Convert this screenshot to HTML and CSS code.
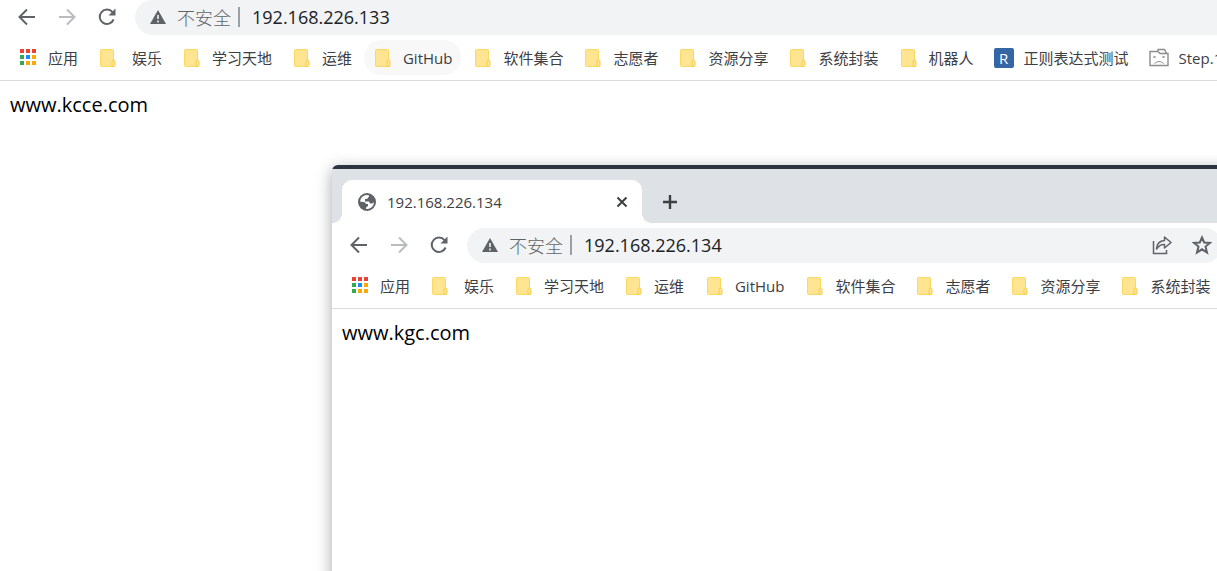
FILE: index.html
```html
<!DOCTYPE html>
<html lang="zh-CN">

<head>
    <meta charset="UTF-8" />
    <meta name="viewport" content="width=device-width, initial-scale=1.0" />
    <title>192.168.226.133</title>
    <link rel="stylesheet" href="styles.css">
</head>

<body>
    <!-- shared icons -->
    <svg class="sprite" aria-hidden="true">
        <symbol id="back" viewBox="0 0 20 20">
            <path d="M18 10H3M10 2.500 2.500 10l7.500 7.500" fill="none" stroke="currentColor" stroke-width="2" />
        </symbol>
        <symbol id="forward" viewBox="0 0 20 20">
            <path d="M2 10h15M10 2.500 17.500 10 10 17.500" fill="none" stroke="currentColor" stroke-width="2" />
        </symbol>
        <symbol id="reload" viewBox="0 0 20 20">
            <path d="M16.600 12.500A7.200 7.200 0 1 1 15.500 5.200" fill="none" stroke="currentColor" stroke-width="2" />
            <path d="M18.500 1.500v7h-7z" fill="currentColor" />
        </symbol>
        <symbol id="warning" viewBox="0 0 16 16">
            <path d="M8 1 16 15H0z" fill="currentColor" />
            <path d="M8 6v4M8 11.500v2" stroke="#f1f3f4" stroke-width="1.600" />
        </symbol>
        <symbol id="apps" viewBox="0 0 20 20">
            <path d="M2 1h4v4H2zM8 1h4v4H8zM14 1h4v4h-4z" fill="#ea4335" />
            <path d="M2 7h4v4H2zM2 13h4v4H2z" fill="#34a853" />
            <path d="M8 7h4v4H8z" fill="#1a8cff" />
            <path d="M14 7h4v4h-4zM8 13h4v4H8zM14 13h4v4h-4z" fill="#fbaa05" />
        </symbol>
        <symbol id="folder" viewBox="0 0 20 20">
            <rect x="2.500" y="1.500" width="13" height="17" rx="1" fill="#ffe592" stroke="#fbd85f" />
            <path d="M14 18.500v-5q0-1.500 1.500-1.500t1.500 1.500v4q0 1-1 1z" fill="#ffe592" stroke="#f3cd4e" />
        </symbol>
        <symbol id="globe" viewBox="0 0 18 18">
            <circle cx="9" cy="9" r="8" fill="#fff" stroke="#5f6368" stroke-width="2" />
            <path d="M1 8.500 5.500 9q2 0 2.500 2h2v2l-2 1.500V17Q1.500 16 1 8.500z" fill="#5f6368" />
            <path d="M11 1.500v2L9 6H7v2.500h4l1 2h2l2.500-1.500Q17 4 11 1.500z" fill="#5f6368" />
        </symbol>
        <symbol id="sad-folder" viewBox="0 0 20 20">
            <path d="M1 17.500v-14h8l2 2h8v12zM9 3.500v-2h6.500l2 4" fill="#fff" stroke="#8c8c8c" stroke-width="1.400" />
            <path d="m4.500 8 2 2m0-2-2 2m9-2 2 2m0-2-2 2M5.500 15.500q4.500-4 9 0" fill="none" stroke="#8c8c8c" />
        </symbol>
        <symbol id="share" viewBox="0 0 20 20">
            <path d="M1.500 6v12.500h13V15" fill="none" stroke="currentColor" stroke-width="1.500" />
            <path d="M12.500 2 19 7.500 12.500 13v-3.500Q8 9 4.500 14 5 6 12.500 5.500z" fill="none" stroke="currentColor" stroke-width="1.500" stroke-linejoin="round" />
        </symbol>
        <symbol id="star" viewBox="0 0 20 20">
            <path d="m10 2.500 2.200 5 5.800.400-4.500 3.700 1.500 5.900-5-3.200-5 3.200 1.500-5.900L2 7.900l5.800-.400z" fill="none" stroke="currentColor" stroke-width="2" />
        </symbol>
        <symbol id="close" viewBox="0 0 12 12">
            <path d="m1.500 1.500 9 9m0-9-9 9" stroke="currentColor" stroke-width="2" />
        </symbol>
        <symbol id="plus" viewBox="0 0 16 16">
            <path d="M8 1v14M1 8h14" stroke="currentColor" stroke-width="2.400" />
        </symbol>
    </svg>

    <main class="browser">
        <div class="toolbar">
            <button class="nav-btn" aria-label="后退"><svg><use href="#back" /></svg></button>
            <button class="nav-btn" aria-label="前进" disabled><svg><use href="#forward" /></svg></button>
            <button class="nav-btn" aria-label="重新加载"><svg><use href="#reload" /></svg></button>
            <div class="omnibox">
                <button class="security"><svg><use href="#warning" /></svg>不安全</button>
                <input type="text" aria-label="地址" value="192.168.226.133" />
            </div>
        </div>
        <nav class="bookmarks">
            <a href="#"><svg><use href="#apps" /></svg>应用</a>
            <a href="#"><svg><use href="#folder" /></svg>&nbsp;娱乐</a>
            <a href="#"><svg><use href="#folder" /></svg>学习天地</a>
            <a href="#"><svg><use href="#folder" /></svg>运维</a>
            <a href="#" class="wide active"><svg><use href="#folder" /></svg>GitHub</a>
            <a href="#"><svg><use href="#folder" /></svg>软件集合</a>
            <a href="#"><svg><use href="#folder" /></svg>志愿者</a>
            <a href="#"><svg><use href="#folder" /></svg>资源分享</a>
            <a href="#"><svg><use href="#folder" /></svg>系统封装</a>
            <a href="#"><svg><use href="#folder" /></svg>机器人</a>
            <a href="#"><span class="r-icon">R</span>正则表达式测试</a>
            <a href="#"><svg><use href="#sad-folder" /></svg>Step.1</a>
        </nav>
        <p class="page">www.kcce.com</p>
    </main>

    <section class="browser popup">
        <div class="tabs">
            <div class="tab">
                <svg class="globe"><use href="#globe" /></svg>
                <span>192.168.226.134</span>
                <button class="close" aria-label="关闭"><svg><use href="#close" /></svg></button>
            </div>
            <button class="new-tab" aria-label="打开新的标签页"><svg><use href="#plus" /></svg></button>
        </div>
        <div class="toolbar">
            <button class="nav-btn" aria-label="后退"><svg><use href="#back" /></svg></button>
            <button class="nav-btn" aria-label="前进" disabled><svg><use href="#forward" /></svg></button>
            <button class="nav-btn" aria-label="重新加载"><svg><use href="#reload" /></svg></button>
            <div class="omnibox">
                <button class="security"><svg><use href="#warning" /></svg>不安全</button>
                <input type="text" aria-label="地址" value="192.168.226.134" />
                <button class="nav-btn" aria-label="分享"><svg><use href="#share" /></svg></button>
                <button class="nav-btn" aria-label="收藏"><svg><use href="#star" /></svg></button>
            </div>
        </div>
        <nav class="bookmarks">
            <a href="#"><svg><use href="#apps" /></svg>应用</a>
            <a href="#"><svg><use href="#folder" /></svg>&nbsp;娱乐</a>
            <a href="#"><svg><use href="#folder" /></svg>学习天地</a>
            <a href="#"><svg><use href="#folder" /></svg>运维</a>
            <a href="#" class="wide"><svg><use href="#folder" /></svg>GitHub</a>
            <a href="#"><svg><use href="#folder" /></svg>软件集合</a>
            <a href="#"><svg><use href="#folder" /></svg>志愿者</a>
            <a href="#"><svg><use href="#folder" /></svg>资源分享</a>
            <a href="#"><svg><use href="#folder" /></svg>系统封装</a>
        </nav>
        <p class="page">www.kgc.com</p>
    </section>
</body>

</html>
```
FILE: styles.css
```css
:root {
    --icon: #5f6368;
    --field: #f1f3f4;
    --strip: #dee1e6;
    --text: #3c4043;
}

* {
    margin: 0;
    padding: 0;
    box-sizing: border-box;
}

body {
    position: relative;
    height: 100vh;
    overflow: hidden;
    background: #fff;
    font-family: "Open Sans", "Noto Sans CJK SC", sans-serif;
}

button {
    border: none;
    background: none;
    font: inherit;
    color: var(--icon);
    cursor: pointer;
}

.sprite {
    position: absolute;
    width: 0;
    height: 0;
}

.browser {
    background: #fff;
}

.toolbar {
    display: flex;
    height: 35px;
    padding-left: 7px;
}

.nav-btn {
    display: flex;
    flex: none;
    align-items: center;
    justify-content: center;
    width: 40px;
    height: 34px;
}

.nav-btn svg {
    width: 20px;
    height: 20px;
}

.nav-btn:disabled {
    color: #babcbe;
}

.omnibox {
    display: flex;
    flex: 1;
    align-items: center;
    height: 35px;
    margin-left: 8px;
    padding: 0 0 2px 15px;
    background: var(--field);
    border-radius: 18px 0 0 18px;
    font-size: 18px;
}

.security {
    display: flex;
    flex: none;
    align-items: center;
    gap: 11px;
    height: 20px;
    padding-right: 7px;
    border-right: 2px solid #9aa0a6;
    font-weight: 300;
}

.security svg {
    width: 16px;
    height: 16px;
}

.omnibox input {
    flex: 1;
    min-width: 0;
    padding-left: 12px;
    border: none;
    outline: none;
    background: none;
    font: inherit;
    color: #202124;
}

.bookmarks {
    display: flex;
    gap: 4px;
    padding: 5px 10px;
    border-bottom: 1px solid #dadce0;
    overflow: hidden;
}

.bookmarks a {
    display: flex;
    flex: none;
    align-items: center;
    gap: 10px;
    height: 35px;
    padding: 0 8px;
    border-radius: 18px;
    color: var(--text);
    font-size: 15px;
    text-decoration: none;
    white-space: pre;
}

.bookmarks .wide {
    padding: 0 9px;
}

.bookmarks a:hover,
.bookmarks .active {
    background: #f8f8f8;
}

.bookmarks svg,
.r-icon {
    width: 20px;
    height: 20px;
}

.r-icon {
    border-radius: 2px;
    background: #3465a4;
    color: #fff;
    line-height: 20px;
    text-align: center;
}

.page {
    padding: 10px;
    color: #000;
    font-size: 20px;
    line-height: 28px;
}

/* second window, runs off the right edge of the desktop */
.popup {
    position: absolute;
    top: 165px;
    right: -48px;
    bottom: -20px;
    left: 332px;
    border-top: 4px solid #2b3440;
    border-radius: 6px 0 0 0;
    box-shadow: 0 4px 16px rgba(0, 0, 0, 0.35);
}

.popup .toolbar {
    height: 45px;
    padding-top: 5px;
    padding-right: 43px;
}

.popup .omnibox {
    border-radius: 18px;
}

.popup .bookmarks {
    padding-top: 0;
}

.tabs {
    display: flex;
    height: 54px;
    padding: 11px 10px 0;
    background: var(--strip);
}

.tab {
    position: relative;
    display: flex;
    align-items: center;
    width: 300px;
    padding: 0 12px 0 16px;
    border-radius: 10px 10px 0 0;
    background: #fff;
    color: var(--text);
    font-size: 15px;
}

/* curved feet of the active tab */
.tab::before,
.tab::after {
    content: "";
    position: absolute;
    bottom: 0;
    width: 10px;
    height: 10px;
}

.tab::before {
    left: -10px;
    background: radial-gradient(circle at 0 0, var(--strip) 10px, #fff 10px);
}

.tab::after {
    right: -10px;
    background: radial-gradient(circle at 100% 0, var(--strip) 10px, #fff 10px);
}

.globe {
    width: 18px;
    height: 18px;
    margin-right: 11px;
}

.close {
    display: flex;
    align-items: center;
    justify-content: center;
    width: 16px;
    height: 20px;
    margin-left: auto;
    color: var(--text);
}

.close svg {
    width: 12px;
    height: 12px;
}

.new-tab {
    display: flex;
    align-items: center;
    padding-left: 20px;
    color: var(--text);
}

.new-tab svg {
    width: 16px;
    height: 16px;
}
```
